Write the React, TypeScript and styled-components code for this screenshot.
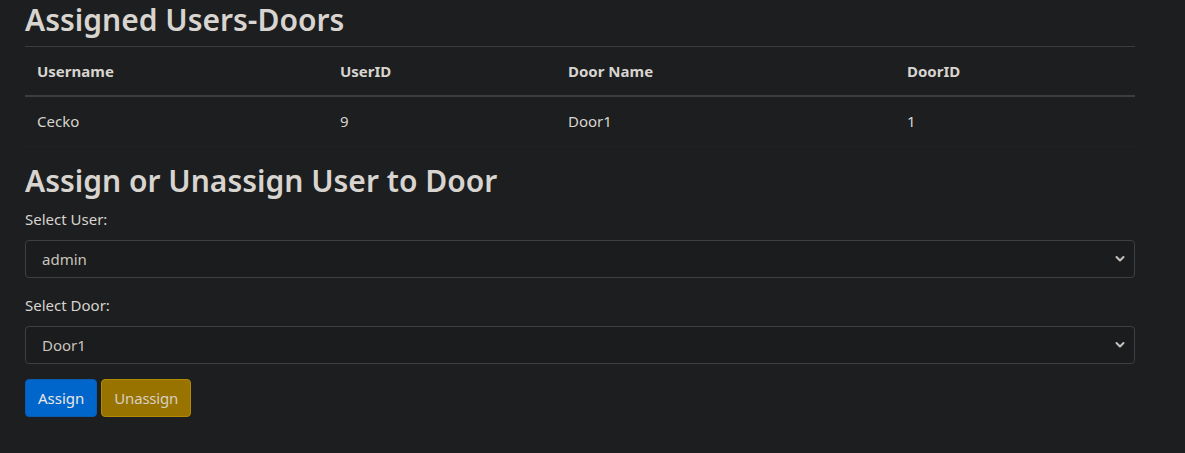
import React from "react";
import styled, { createGlobalStyle } from "styled-components";

const Global = createGlobalStyle`
  html, body { margin: 0; padding: 0; background: #1c1e20; }
  body {
    font-family: "Noto Sans", "Open Sans", sans-serif;
    color: #d8d4cf;
    font-size: 15px;
  }
  * { box-sizing: border-box; }
`;

const Page = styled.div`
  padding: 0 25px;
  width: 1160px;
`;

const Heading = styled.h2`
  margin: 0 0 6px;
  font-size: 30px;
  font-weight: 600;
  line-height: 40px;
  color: #d8d4cf;
`;

const Table = styled.table`
  width: 100%;
  border-collapse: collapse;
  margin-bottom: 14px;
  border-top: 1px solid #3a3e41;
`;

const Th = styled.th`
  text-align: left;
  font-weight: 700;
  font-size: 15px;
  padding: 12px;
  line-height: 24px;
  border-bottom: 2px solid #3a3e41;
`;

const Td = styled.td`
  padding: 12px 12px 13px;
  line-height: 24px;
  font-size: 15px;
  border-bottom: 1px solid #1f2224;
`;

const Field = styled.div`
  margin-bottom: 15px;
  display: flex;
  flex-direction: column;
`;

const Label = styled.label`
  font-size: 15px;
  line-height: 24px;
  margin-bottom: 9px;
`;

const SelectBox = styled.div`
  position: relative;
  height: 38px;
  border: 1px solid #3c4043;
  border-radius: 4px;
  background: #1a1c1d;
  display: flex;
  align-items: center;
  padding: 0 16px;
  font-size: 15px;
  color: #c9c4bd;
`;

const Chevron = styled.svg`
  position: absolute;
  right: 9px;
  top: 50%;
  margin-top: -4px;
`;

const Buttons = styled.div`
  display: flex;
  gap: 4px;
  margin-top: 1px;
`;

const Button = styled.button<{ $variant: "primary" | "warning" }>`
  height: 38px;
  padding: 0 12px;
  border-radius: 4px;
  font-family: inherit;
  font-size: 15px;
  letter-spacing: ${(p) => (p.$variant === "primary" ? "0" : "-0.2px")};
  border: 1px solid ${(p) => (p.$variant === "primary" ? "#0a5cb0" : "#b38900")};
  background: ${(p) => (p.$variant === "primary" ? "#0066cc" : "#997300")};
  color: ${(p) => (p.$variant === "primary" ? "#ebe8e4" : "#d6cfc3")};
`;

function Select({ value }: { value: string }) {
  return (
    <SelectBox>
      {value}
      <Chevron width="10" height="8" viewBox="0 0 10 8">
        <path d="M1.5 2 L5 5.5 L8.5 2" fill="none" stroke="#c9c4bd" strokeWidth="2" strokeLinecap="round" strokeLinejoin="round" />
      </Chevron>
    </SelectBox>
  );
}

export default function App() {
  return (
    <Page>
      <Global />
      <Heading>Assigned Users-Doors</Heading>
      <Table>
        <thead>
          <tr>
            <Th style={{ width: 303 }}>Username</Th>
            <Th style={{ width: 228 }}>UserID</Th>
            <Th style={{ width: 339 }}>Door Name</Th>
            <Th>DoorID</Th>
          </tr>
        </thead>
        <tbody>
          <tr>
            <Td>Cecko</Td>
            <Td>9</Td>
            <Td>Door1</Td>
            <Td>1</Td>
          </tr>
        </tbody>
      </Table>
      <Heading>Assign or Unassign User to Door</Heading>
      <Field>
        <Label>Select User:</Label>
        <Select value="admin" />
      </Field>
      <Field>
        <Label>Select Door:</Label>
        <Select value="Door1" />
      </Field>
      <Buttons>
        <Button $variant="primary">Assign</Button>
        <Button $variant="warning">Unassign</Button>
      </Buttons>
    </Page>
  );
}
